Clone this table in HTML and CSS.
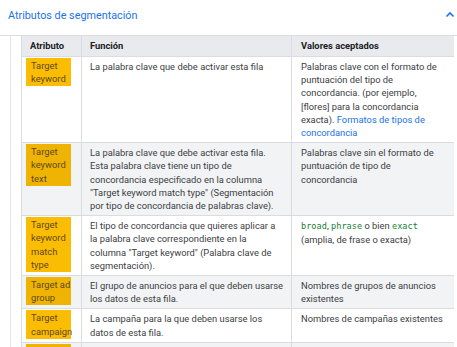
FILE: index.html
```html
<!DOCTYPE html>
<html lang="es">
<head>
<meta charset="utf-8">
<link rel="stylesheet" href="styles.css">
</head>
<body>
<div class="acc-header">
  <span class="acc-title">Atributos de segmentación</span>
  <svg class="chevron" width="10" height="7" viewBox="0 0 10 7"><path d="M1.5 5.5 L5 2 L8.5 5.5" fill="none" stroke="#1a73e8" stroke-width="1.6"/></svg>
</div>
<div class="acc-body">
  <table class="attrs">
    <colgroup><col class="c1"><col class="c2"><col class="c3"></colgroup>
    <thead>
      <tr><th>Atributo</th><th>Función</th><th>Valores aceptados</th></tr>
    </thead>
    <tbody>
      <tr>
        <td><div class="hl">Target keyword</div></td>
        <td>La palabra clave que debe activar esta fila</td>
        <td>Palabras clave con el formato de puntuación del tipo de concordancia.&nbsp;(por ejemplo, [flores] para la concordancia exacta). <a href="#">Formatos de tipos de concordancia</a></td>
      </tr>
      <tr class="alt">
        <td><div class="hl">Target keyword text</div></td>
        <td>La palabra clave que debe activar esta fila. Esta palabra clave tiene un tipo de concordancia especificado en la columna "Target keyword match type" (Segmentación por tipo de concordancia de palabras clave).</td>
        <td>Palabras clave sin el formato de puntuación de tipo de concordancia</td>
      </tr>
      <tr>
        <td><div class="hl">Target keyword match type</div></td>
        <td>El tipo de concordancia que quieres aplicar a la palabra clave correspondiente en la columna "Target keyword" (Palabra clave de segmentación).</td>
        <td><code>broad</code>, <code>phrase</code> o bien <code>exact</code> (amplia, de frase o exacta)</td>
      </tr>
      <tr class="alt">
        <td><div class="hl">Target ad group</div></td>
        <td>El grupo de anuncios para el que deben usarse los datos de esta fila.</td>
        <td>Nombres de grupos de anuncios existentes</td>
      </tr>
      <tr>
        <td><div class="hl">Target campaign</div></td>
        <td>La campaña para la que deben usarse los datos de esta fila.</td>
        <td>Nombres de campañas existentes</td>
      </tr>
      <tr class="alt">
        <td><div class="hl">Target group</div></td>
        <td>&nbsp;</td>
        <td>&nbsp;</td>
      </tr>
    </tbody>
  </table>
</div>
</body>
</html>
```
FILE: styles.css
```css
html, body {
  margin: 0;
  padding: 0;
  background: #ffffff;
  overflow: hidden;
}
body {
  font-family: Roboto, "Noto Sans", sans-serif;
  color: #3c4043;
  width: 457px;
  height: 347px;
}
.acc-header {
  border-bottom: 1px solid #dadce0;
  display: flex;
  align-items: center;
  justify-content: space-between;
  padding: 0 2px 0 8px;
  box-sizing: border-box;
  height: 36px;
}
.acc-title {
  font-size: 10.8px;
  color: #1a73e8;
  margin-top: -5px;
}
.chevron {
  margin-top: -6px;
}
.acc-body {
  margin-left: 10px;
  border-left: 1px solid #e3e5e8;
  padding-left: 10px;
}
.attrs {
  border-collapse: collapse;
  table-layout: fixed;
  width: 432px;
  font-size: 9.35px;
  line-height: 13.2px;
  border-left: 1px solid #dadce0;
}
.c1 { width: 60px; }
.c2 { width: 210px; }
.c3 { width: 162px; }
.attrs th {
  background: #e8eaed;
  color: #202124;
  font-weight: 700;
  text-align: left;
  height: 20px;
  padding: 0 4px 0 8px;
  border-left: 1px solid #dadce0;
}
.attrs th:last-child {
  padding-left: 9px;
}
.attrs td {
  vertical-align: top;
  padding: 3px 7px 3px 8px;
  border-left: 1px solid #dadce0;
  border-top: 1px solid #dadce0;
}
.attrs td:last-child {
  padding: 3px 8px 3px 9px;
}
.attrs tr.alt td {
  background: #f1f3f4;
}
.attrs td:first-child {
  padding: 1px 0 1px 4px;
  overflow: visible;
}
.hl {
  width: 40px;
  padding: 1px 0 1px 5px;
  background: #fbbc04;
  color: #5f4a1a;
  overflow: visible;
}
tr.alt .hl {
  background: #efb304;
}
a {
  color: #1a73e8;
  text-decoration: none;
}
code {
  font-family: "DejaVu Sans Mono", "Liberation Mono", monospace;
  font-size: 8.6px;
  color: #188038;
}
```
